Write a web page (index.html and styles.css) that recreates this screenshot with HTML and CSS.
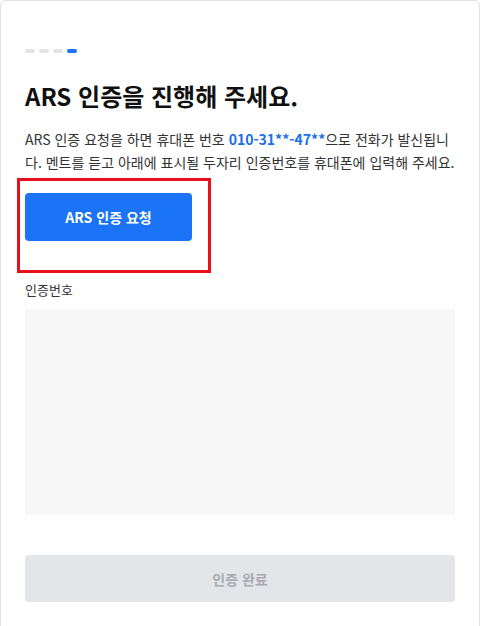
FILE: index.html
```html
<!DOCTYPE html>
<html lang="ko">
<head>
    <meta charset="UTF-8">
    <meta name="viewport" content="width=device-width, initial-scale=1.0">
    <title>ARS 인증</title>
    <link rel="stylesheet" href="styles.css">
</head>
<body>
    <div class="card">
        <div class="steps">
            <span class="step"></span>
            <span class="step"></span>
            <span class="step"></span>
            <span class="step step-on"></span>
        </div>
        <h1 class="title">ARS 인증을 진행해 주세요.</h1>
        <p class="desc">ARS 인증 요청을 하면 휴대폰 번호 <b class="phone">010-31**-47**</b>으로 전화가 발신됩니다. 멘트를 듣고 아래에 표시될 두자리 인증번호를 휴대폰에 입력해 주세요.</p>
        <div class="ars-wrap">
            <button class="btn btn-ars" type="button">ARS 인증 요청</button>
            <div class="mark"></div>
        </div>
        <div class="label">인증번호</div>
        <div class="code-box"></div>
        <button class="btn btn-done" type="button" disabled>인증 완료</button>
    </div>
</body>
</html>
```

FILE: styles.css
```css
body{
    margin:0;
    font-family:"Noto Sans CJK KR","Noto Sans",sans-serif;
    color:#222;
    background:#fff;
}
.card{
    width:480px;
    box-sizing:border-box;
    min-height:640px;
    border:1px solid #e2e2e2;
    border-radius:6px 6px 0 0;
    padding:48px 24px 0;
}
.steps{
    display:flex;
    gap:4px;
}
.step{
    width:10px;
    height:4px;
    border-radius:2px;
    background:#e3e4e6;
}
.step-on{
    background:#1a73f5;
}
.title{
    margin:26px 0 0;
    font-size:24px;
    line-height:34px;
    font-weight:700;
    color:#111;
}
.desc{
    margin:15px 0 0;
    font-size:14px;
    line-height:23px;
    color:#333;
    word-break:break-all;
}
.phone{
    color:#1a6fe8;
    font-weight:700;
    line-height:1;
}
.ars-wrap{
    position:relative;
    margin-top:19px;
    width:167px;
}
.btn{
    display:block;
    border:none;
    border-radius:4px;
    font-family:inherit;
    font-size:14px;
    font-weight:700;
}
.btn-ars{
    width:167px;
    height:48px;
    background:#1b74f5;
    color:#fff;
}
/* 캡처에 표시된 빨간 박스 */
.mark{
    position:absolute;
    left:-8px;
    top:-15px;
    width:194px;
    height:95px;
    box-sizing:border-box;
    border:3px solid #e8101a;
}
.label{
    margin-top:39px;
    font-size:13px;
    line-height:20px;
    color:#333;
}
.code-box{
    margin-top:9px;
    height:206px;
    background:#f7f7f7;
}
.btn-done{
    margin-top:40px;
    width:100%;
    height:47px;
    background:#e4e5e8;
    color:#a8aab0;
}
```
